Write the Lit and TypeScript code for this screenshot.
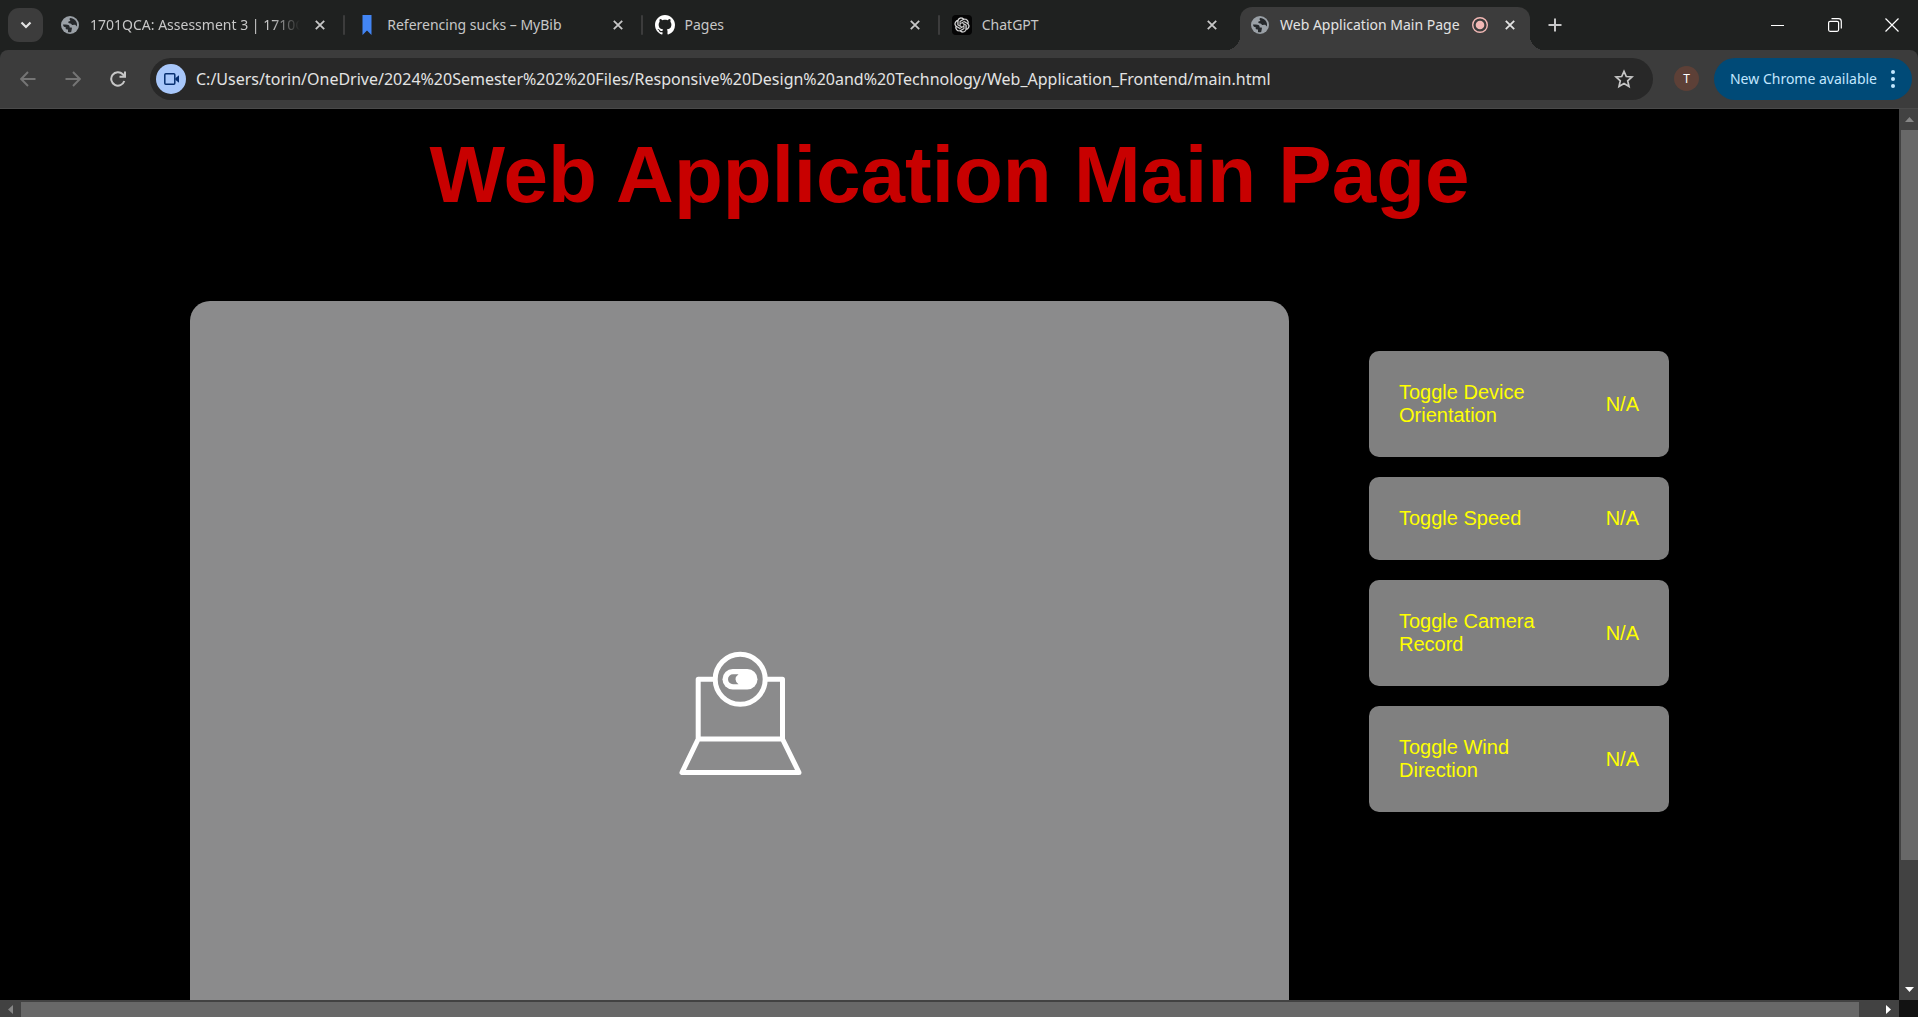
import { LitElement, html, svg, css, nothing } from "lit";
import { customElement, property, state } from "lit/decorators.js";

const globe = svg`<svg viewBox="0 0 18 18" width="18" height="18" aria-hidden="true">
  <circle cx="9" cy="9" r="9" fill="#9aa0a6"/>
  <path fill="#25282b" d="M2 8.500C3.500 8.300 5 8.600 6.500 8.800C8 9 8.600 9.700 8.600 10.800V11.600H10.200C10.900 11.600 11 12.200 10.800 13L10.200 15.900C9 16.300 7.500 16.200 7 15.900V13.400H6C5 13.400 4.600 12.800 4.600 12V11H3.600C2.800 11 2.200 10 2 8.500Z"/>
  <path fill="#25282b" d="M9 2C11.500 2 14 3.200 15.200 5.600C16 7.200 16.200 8.600 15.900 10.400L14.700 9.200C14 8.600 13 9 12 9C10.800 9 10.500 7.600 9.200 7.400C7.700 7.200 7.300 6.900 7.300 6.200C7.300 5.400 8.200 5.400 9 5.100C9.700 4.800 9 3.800 8.400 3.200Z"/>
</svg>`;
const bookmark = svg`<svg viewBox="0 0 20 20" width="20" height="20" aria-hidden="true"><path fill="#4285f4" d="M5.500 0H14.500V20L10 15.500L5.500 20Z"/></svg>`;
const github = svg`<svg viewBox="0 0 16 16" width="20" height="20" aria-hidden="true"><path fill="#fff" d="M8 0C3.580 0 0 3.580 0 8c0 3.540 2.290 6.530 5.470 7.590.4.070.55-.17.55-.38 0-.19-.01-.82-.01-1.490-2.010.37-2.530-.49-2.690-.94-.09-.23-.48-.94-.82-1.130-.28-.15-.68-.52-.01-.53.63-.01 1.080.58 1.230.82.72 1.210 1.870.87 2.330.66.07-.52.28-.87.51-1.070-1.780-.2-3.640-.89-3.640-3.950 0-.87.31-1.590.82-2.150-.08-.2-.36-1.020.08-2.120 0 0 .67-.21 2.200.82.64-.18 1.320-.27 2-.27s1.360.09 2 .27c1.530-1.040 2.200-.82 2.200-.82.44 1.100.16 1.920.08 2.120.51.56.82 1.270.82 2.150 0 3.070-1.870 3.750-3.650 3.950.29.25.54.73.54 1.480 0 1.070-.01 1.930-.01 2.200 0 .21.15.46.55.38A8.010 8.010 0 0 0 16 8c0-4.420-3.580-8-8-8z"/></svg>`;
const openai = svg`<svg viewBox="0 0 20 20" width="20" height="20" aria-hidden="true">
  <rect width="20" height="20" rx="4" fill="#050505"/>
  <g transform="translate(2.500 2.500) scale(.625)"><path fill="#e8e8e8" stroke="#e8e8e8" stroke-width=".4" d="M22.282 9.821a5.985 5.985 0 0 0-.516-4.910 6.046 6.046 0 0 0-6.510-2.900A6.065 6.065 0 0 0 4.981 4.180a5.985 5.985 0 0 0-3.998 2.900 6.046 6.046 0 0 0 .743 7.097 5.980 5.980 0 0 0 .510 4.911 6.051 6.051 0 0 0 6.515 2.900A5.985 5.985 0 0 0 13.260 24a6.056 6.056 0 0 0 5.772-4.206 5.990 5.990 0 0 0 3.997-2.900 6.056 6.056 0 0 0-.747-7.073zM13.260 22.430a4.476 4.476 0 0 1-2.876-1.040l.141-.081 4.779-2.758a.795.795 0 0 0 .392-.681v-6.737l2.020 1.168a.071.071 0 0 1 .038.052v5.583a4.504 4.504 0 0 1-4.494 4.494zM3.600 18.304a4.470 4.470 0 0 1-.535-3.014l.142.085 4.783 2.759a.771.771 0 0 0 .780 0l5.843-3.369v2.332a.080.080 0 0 1-.033.062L9.740 19.950a4.500 4.500 0 0 1-6.140-1.646zM2.340 7.896a4.485 4.485 0 0 1 2.366-1.973V11.600a.766.766 0 0 0 .388.676l5.815 3.355-2.020 1.168a.076.076 0 0 1-.071 0l-4.830-2.786A4.504 4.504 0 0 1 2.340 7.872zm16.597 3.855l-5.833-3.387L15.119 7.200a.076.076 0 0 1 .071 0l4.830 2.791a4.494 4.494 0 0 1-.676 8.105v-5.678a.790.790 0 0 0-.407-.667zm2.010-3.023l-.141-.085-4.774-2.782a.776.776 0 0 0-.785 0L9.409 9.230V6.897a.066.066 0 0 1 .028-.061l4.830-2.787a4.500 4.500 0 0 1 6.680 4.660zm-12.640 4.135l-2.020-1.164a.080.080 0 0 1-.038-.057V6.075a4.500 4.500 0 0 1 7.375-3.453l-.142.080L8.704 5.460a.795.795 0 0 0-.393.681zm1.097-2.365l2.602-1.500 2.607 1.500v2.999l-2.597 1.500-2.607-1.500z"/></g>
</svg>`;
const cross = svg`<svg viewBox="0 0 10 10" width="10" height="10" aria-hidden="true"><path d="M.8.8L9.200 9.200M9.200.8L.8 9.200" stroke="currentColor" stroke-width="1.800" fill="none"/></svg>`;

interface Tab {
  title: string;
  icon: unknown;
  recording?: boolean;
}

const TABS: Tab[] = [
  { title: "1701QCA: Assessment 3 | 1710QCA", icon: globe },
  { title: "Referencing sucks – MyBib", icon: bookmark },
  { title: "Pages", icon: github },
  { title: "ChatGPT", icon: openai },
  { title: "Web Application Main Page", icon: globe, recording: true },
];

const READINGS = [
  "Toggle Device Orientation",
  "Toggle Speed",
  "Toggle Camera Record",
  "Toggle Wind Direction",
];

const resetButton = css`
  button {
    border: 0;
    padding: 0;
    margin: 0;
    background: none;
    color: inherit;
    font: inherit;
    display: flex;
    align-items: center;
    justify-content: center;
  }
  svg {
    display: block;
    flex: none;
  }
`;

@customElement("tab-strip")
class TabStrip extends LitElement {
  @state() private active = 4;

  static styles = [
    resetButton,
    css`
      :host {
        display: flex;
        height: 50px;
        background: #1f2120;
        color: #c7c7c7;
        font: 14px/20px "Noto Sans", sans-serif;
      }
      .search {
        width: 35px;
        height: 34px;
        margin: 8px 8px 0;
        border-radius: 11px;
        background: #3c3c3c;
        color: #e3e3e3;
        flex: none;
      }
      .tabs {
        display: flex;
        flex: 0 1 1479px;
        min-width: 0;
      }
      .tab {
        flex: 1 1 0;
        min-width: 0;
        display: flex;
        align-items: center;
        gap: 10px;
        margin-top: 7px;
        padding: 0 18px 7px 9px;
        height: 36px;
        position: relative;
      }
      .tab:not(.active):not(.last)::after {
        content: "";
        position: absolute;
        right: 3px;
        top: 8px;
        width: 2px;
        height: 20px;
        border-radius: 1px;
        background: #3c3c3c;
      }
      .tab.active {
        flex: 0 1 270px;
        background: #3c3c3c;
        color: #e3e3e3;
        border-radius: 12px 12px 0 0;
        padding-left: 10px;
        padding-right: 10px;
      }
      .tab.active::before,
      .tab.active::after {
        content: "";
        position: absolute;
        bottom: 0;
        width: 14px;
        height: 14px;
      }
      .tab.active::before {
        right: 100%;
        background: radial-gradient(circle at 0 0, transparent 14px, #3c3c3c 14px);
      }
      .tab.active::after {
        left: 100%;
        background: radial-gradient(circle at 100% 0, transparent 14px, #3c3c3c 14px);
      }
      .icon {
        width: 20px;
        display: flex;
        justify-content: center;
        flex: none;
      }
      .title {
        flex: 1 1 0;
        min-width: 0;
        white-space: nowrap;
        text-align: left;
      }
      .title.long {
        overflow: hidden;
        mask-image: linear-gradient(to right, #000 calc(100% - 28px), transparent);
      }
      .close {
        width: 20px;
        height: 20px;
        flex: none;
      }
      .new {
        width: 34px;
        height: 34px;
        margin: 8px 0 0 8px;
        flex: none;
      }
      .window {
        display: flex;
        margin: 0 -2px 0 auto;
        color: #fff;
      }
      .window button {
        width: 57px;
        height: 50px;
      }
    `,
  ];

  render() {
    return html`
      <button class="search" aria-label="Search tabs">
        <svg viewBox="0 0 12 8" width="12" height="8"><path d="M1.500 1.500L6 6L10.500 1.500" fill="none" stroke="currentColor" stroke-width="2.200"/></svg>
      </button>
      <div class="tabs" role="tablist">
        ${TABS.map(
          (tab, i) => html`
            <div
              class="tab ${i === this.active ? "active" : ""} ${i === this.active - 1 ? "last" : ""}"
              role="tab"
              aria-selected=${i === this.active}
              @click=${() => (this.active = i)}
            >
              <span class="icon">${tab.icon}</span>
              <span class="title ${tab.title.length > 26 ? "long" : ""}">${tab.title}</span>
              ${tab.recording
                ? html`<span class="icon"><svg viewBox="0 0 16 16" width="16" height="16"><circle cx="8" cy="8" r="7.300" fill="none" stroke="#f2b8b5" stroke-width="1.400"/><circle cx="8" cy="8" r="4.300" fill="#f2b8b5"/></svg></span>`
                : nothing}
              <button class="close" aria-label="Close tab">${cross}</button>
            </div>
          `
        )}
      </div>
      <button class="new" aria-label="New tab">
        <svg viewBox="0 0 14 14" width="14" height="14"><path d="M7 .5V13.500M.5 7H13.500" stroke="currentColor" stroke-width="2"/></svg>
      </button>
      <div class="window">
        <button aria-label="Minimize"><svg viewBox="0 0 13 13" width="13" height="13"><path d="M0 6.500H13" stroke="currentColor"/></svg></button>
        <button aria-label="Restore"><svg viewBox="0 0 14 14" width="14" height="14" fill="none" stroke="currentColor"><rect x=".6" y="3.300" width="10" height="10" rx="1.500" stroke-width="1.200"/><path d="M3.500.7H10.500Q13.300.7 13.300 3.500V10.500" stroke-width="1.200"/></svg></button>
        <button aria-label="Close"><svg viewBox="0 0 14 14" width="14" height="14"><path d="M.5.5L13.500 13.500M13.500.5L.5 13.500" stroke="currentColor" stroke-width="1.200"/></svg></button>
      </div>
    `;
  }
}

@customElement("address-toolbar")
class AddressToolbar extends LitElement {
  static styles = [
    resetButton,
    css`
      :host {
        display: block;
        background: #1f2120;
      }
      .bar {
        display: flex;
        align-items: center;
        box-sizing: border-box;
        height: 59px;
        padding: 0 6px 1px 5px;
        background: #3c3c3c;
        border-bottom: 1px solid #4a4a4a;
        border-radius: 8px 8px 0 0;
        color: #c7c7c7;
      }
      .nav {
        width: 45px;
        height: 40px;
        flex: none;
      }
      .nav:disabled {
        color: #757575;
      }
      .omnibox {
        flex: 1 1 0;
        min-width: 0;
        display: flex;
        align-items: center;
        height: 42px;
        margin-left: 10px;
        padding: 0 12px 0 6px;
        border-radius: 21px;
        background: #282828;
      }
      .camera {
        width: 30px;
        height: 30px;
        border-radius: 50%;
        background: #a8c7fa;
        color: #062e6f;
        flex: none;
      }
      .url {
        flex: 1 1 0;
        min-width: 0;
        margin: 0 10px;
        padding: 0;
        border: 0;
        outline: 0;
        background: none;
        color: #e3e3e3;
        font: 16px/24px "Noto Sans", sans-serif;
      }
      .star {
        width: 34px;
        height: 34px;
        flex: none;
      }
      .avatar {
        width: 25px;
        height: 25px;
        margin: 0 15px 0 21px;
        border-radius: 50%;
        background: #5d4037;
        color: #fff;
        font: 12px/25px "Noto Sans", sans-serif;
        flex: none;
      }
      .update {
        height: 42px;
        padding: 0 17px 0 16px;
        gap: 14px;
        border-radius: 21px;
        background: #004a77;
        color: #c2e7ff;
        font: 14px/20px "Noto Sans", sans-serif;
        white-space: nowrap;
        flex: none;
      }
    `,
  ];

  render() {
    return html`
      <div class="bar">
        <button class="nav" aria-label="Back" disabled>
          <svg viewBox="0 0 16 16" width="16" height="16" fill="none" stroke="currentColor" stroke-width="1.900"><path d="M15.500 8H1.500M8 1L1.200 8L8 15"/></svg>
        </button>
        <button class="nav" aria-label="Forward" disabled>
          <svg viewBox="0 0 16 16" width="16" height="16" fill="none" stroke="currentColor" stroke-width="1.900"><path d="M.5 8H14.500M8 1L14.800 8L8 15"/></svg>
        </button>
        <button class="nav" aria-label="Reload">
          <svg viewBox="0 0 16 16" width="16" height="16" fill="none" stroke="currentColor" stroke-width="2"><path d="M14.300 10A6.700 6.700 0 1 1 12.800 3.300L14.500 5.200M15 .5V5.800H9.500"/></svg>
        </button>
        <div class="omnibox">
          <button class="camera" aria-label="Camera in use">
            <svg viewBox="0 0 15 12" width="15" height="12"><rect x=".8" y=".8" width="10" height="10.400" rx="1" fill="none" stroke="currentColor" stroke-width="1.500"/><path d="M11.300 5.300L15 2.300V9.700L11.300 6.700Z" fill="currentColor"/></svg>
          </button>
          <input class="url" aria-label="Address" value="C:/Users/torin/OneDrive/2024%20Semester%202%20Files/Responsive%20Design%20and%20Technology/Web_Application_Frontend/main.html" />
          <button class="star" aria-label="Bookmark this page">
            <svg viewBox="0 0 20 20" width="20" height="20"><path d="M10 2.300L12.300 7.500L18 8L13.700 11.800L15 17.400L10 14.400L5 17.400L6.300 11.800L2 8L7.700 7.500Z" fill="none" stroke="currentColor" stroke-width="1.700"/></svg>
          </button>
        </div>
        <button class="avatar" aria-label="Profile">T</button>
        <button class="update">
          New Chrome available
          <svg viewBox="0 0 4 18" width="4" height="18" fill="currentColor"><circle cx="2" cy="2" r="2"/><circle cx="2" cy="9" r="2"/><circle cx="2" cy="16" r="2"/></svg>
        </button>
      </div>
    `;
  }
}

@customElement("scroll-track")
class ScrollTrack extends LitElement {
  @property({ reflect: true }) axis: "x" | "y" = "y";

  static styles = css`
    :host {
      display: flex;
      background: #424242;
      min-width: 0;
      min-height: 0;
    }
    :host([axis="y"]) {
      flex-direction: column;
      padding-left: 2px;
    }
    :host([axis="x"]) {
      padding-top: 2px;
    }
    .end {
      flex: 0 0 21px;
      display: flex;
      align-items: center;
      justify-content: center;
      color: #fff;
    }
    .start {
      color: #868686;
    }
    .rail {
      flex: 1 1 0;
      display: flex;
      flex-direction: inherit;
    }
    .thumb {
      background: #686868;
      flex: none;
    }
    :host([axis="y"]) .thumb {
      height: 86%;
    }
    :host([axis="x"]) .thumb {
      width: 99%;
    }
    svg {
      display: block;
    }
  `;

  render() {
    const y = this.axis === "y";
    return html`
      <div class="end start">
        ${y
          ? svg`<svg viewBox="0 0 9 5" width="9" height="5" fill="currentColor"><path d="M0 5L4.500 0L9 5Z"/></svg>`
          : svg`<svg viewBox="0 0 5 9" width="5" height="9" fill="currentColor"><path d="M5 0L0 4.500L5 9Z"/></svg>`}
      </div>
      <div class="rail"><div class="thumb"></div></div>
      <div class="end">
        ${y
          ? svg`<svg viewBox="0 0 9 5" width="9" height="5" fill="currentColor"><path d="M0 0L4.500 5L9 0Z"/></svg>`
          : svg`<svg viewBox="0 0 5 9" width="5" height="9" fill="currentColor"><path d="M0 0L5 4.500L0 9Z"/></svg>`}
      </div>
    `;
  }
}

@customElement("app-root")
class AppRoot extends LitElement {
  static styles = css`
    :host {
      display: flex;
      flex-direction: column;
      height: 100vh;
      background: #000;
      overflow: hidden;
    }
    .viewport {
      flex: 1 1 0;
      min-height: 0;
      display: grid;
      grid-template-columns: minmax(0, 1fr) 19px;
      grid-template-rows: minmax(0, 1fr) 17px;
    }
    .page {
      overflow: hidden;
      background: #000;
      font: 20px/23px "Liberation Sans", sans-serif;
    }
    h1 {
      margin: 20px 0 80px;
      font-size: 80px;
      line-height: 92px;
      font-weight: bold;
      color: #c80000;
      text-align: center;
    }
    .columns {
      display: flex;
      align-items: flex-start;
      gap: 80px;
      padding: 0 230px 0 190px;
    }
    .video {
      flex: 1 1 0;
      min-width: 0;
      aspect-ratio: 4 / 3;
      display: flex;
      align-items: center;
      justify-content: center;
      border-radius: 20px;
      background: #8b8b8c;
    }
    .readings {
      flex: 0 0 300px;
      display: flex;
      flex-direction: column;
      gap: 20px;
      padding-top: 50px;
    }
    .reading {
      display: flex;
      align-items: center;
      justify-content: space-between;
      gap: 20px;
      padding: 30px;
      border: 0;
      border-radius: 10px;
      background: #808080;
      color: #ff0;
      font: inherit;
      text-align: left;
    }
    .name {
      width: 140px;
    }
    .corner {
      background: #121212;
    }
  `;

  render() {
    return html`
      <tab-strip></tab-strip>
      <address-toolbar></address-toolbar>
      <div class="viewport">
        <main class="page">
          <h1>Web Application Main Page</h1>
          <div class="columns">
            <div class="video">
              <svg viewBox="0 0 124 126" width="124" height="126" fill="none" stroke="#fff" stroke-width="5" stroke-linejoin="round" role="img" aria-label="Camera off">
                <circle cx="62.200" cy="29.300" r="25"/>
                <path d="M37 29.300H20.200V89H104.500V29.300H87M20.200 89L4 122.500H121L104.500 89"/>
                <rect x="44.500" y="19" width="35" height="20.500" rx="10.200" fill="#fff" stroke="none"/>
                <path d="M60.500 24.300H55A5 5 0 0 0 55 34.300H60.500Q57.500 32 57.500 29.300Q57.500 26.500 60.500 24.300Z" fill="#8b8b8c" stroke="none"/>
              </svg>
            </div>
            <div class="readings">
              ${READINGS.map(
                (name) => html`<button class="reading"><span class="name">${name}</span><span>N/A</span></button>`
              )}
            </div>
          </div>
        </main>
        <scroll-track axis="y"></scroll-track>
        <scroll-track axis="x"></scroll-track>
        <div class="corner"></div>
      </div>
    `;
  }
}
